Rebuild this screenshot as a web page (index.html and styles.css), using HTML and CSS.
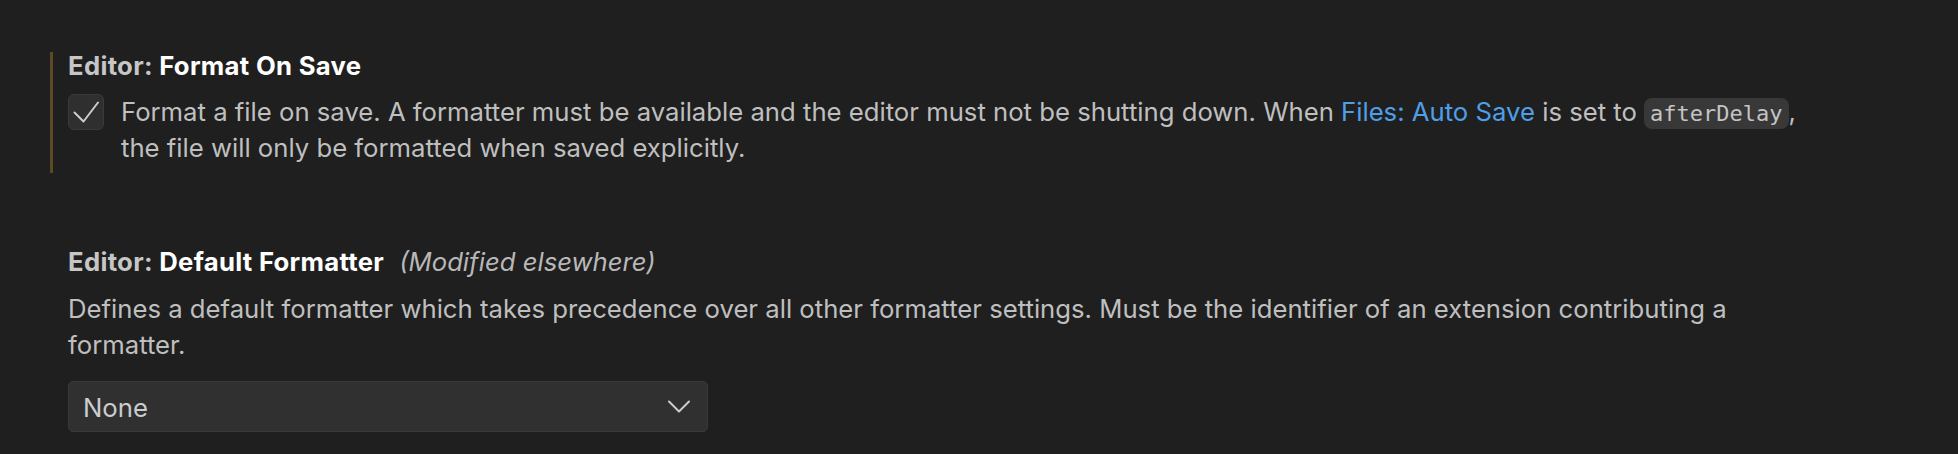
FILE: index.html
```html
<!DOCTYPE html>
<html lang="en">
<head>
<meta charset="utf-8">
<title>Settings</title>
<link rel="stylesheet" href="styles.css">
</head>
<body>
<div class="settings-list">
  <div class="setting modified">
    <div class="setting-title"><span class="category">Editor: </span><span class="label">Format On Save</span></div>
    <div class="bool-row">
      <div class="checkbox">
        <svg width="36" height="36" viewBox="0 0 36 36"><polyline points="6.5,18.5 15.5,27.5 30,8.5" fill="none" stroke="#cccccc" stroke-width="2" stroke-linecap="round" stroke-linejoin="round"/></svg>
      </div>
      <div class="description">Format a file on save. A formatter must be available and the editor must not be shutting down. When <span class="link">Files: Auto Save</span> is set to <code class="code">afterDelay</code>,<br>the file will only be formatted when saved explicitly.</div>
    </div>
  </div>
  <div class="setting second">
    <div class="setting-title"><span class="category">Editor: </span><span class="label">Default Formatter</span><span class="overrides">(Modified elsewhere)</span></div>
    <div class="description">Defines a default formatter which takes precedence over all other formatter settings. Must be the identifier of an extension contributing a formatter.</div>
    <div class="select">
      <span class="select-value">None</span>
      <svg class="chevron" width="22" height="14" viewBox="0 0 22 14"><polyline points="1,1.5 11,11.5 21,1.5" fill="none" stroke="#cccccc" stroke-width="2" stroke-linecap="round" stroke-linejoin="round"/></svg>
    </div>
  </div>
</div>
</body>
</html>
```
FILE: styles.css
```css
html, body {
  margin: 0;
  padding: 0;
  background: #1f1f1f;
}
body {
  font-family: Inter, "Noto Sans", sans-serif;
  font-size: 25.7px;
  color: #bfbfbf;
}
.settings-list {
  padding: 52px 0 0 50px;
  width: 1780px;
  display: flex;
  flex-direction: column;
  gap: 75px;
}
.setting {
  border-left: 3px solid transparent;
  padding-left: 15px;
  padding-bottom: 7px;
}
.setting.modified {
  border-left-color: #5d4a25;
}
.setting-title {
  line-height: 28px;
  font-weight: 700;
  letter-spacing: 0.3px;
  white-space: nowrap;
  margin-bottom: 14px;
}
.second .setting-title {
  margin-bottom: 15px;
}
.category {
  color: #c6c6c6;
}
.label {
  color: #ffffff;
}
.overrides {
  font-style: italic;
  font-weight: 400;
  letter-spacing: 0;
  color: #b8b8b8;
  margin-left: 15px;
}
.bool-row {
  display: flex;
  align-items: flex-start;
  gap: 17px;
}
.checkbox {
  flex: none;
  width: 34px;
  height: 34px;
  border: 1px solid #3a3a3a;
  border-radius: 6px;
  background: #2f2f2f;
  display: flex;
  align-items: center;
  justify-content: center;
}
.checkbox svg {
  display: block;
  margin: -1px;
}
.description {
  line-height: 36px;
  color: #bfbfbf;
}
.link {
  color: #4f9fe8;
}
.code {
  display: inline-block;
  font-family: "DejaVu Sans Mono", monospace;
  font-size: 22px;
  line-height: 31px;
  color: #c4c4c4;
  background: #383838;
  border-radius: 8px;
  padding: 0 6px;
}
.select {
  margin-top: 18px;
  box-sizing: border-box;
  width: 640px;
  height: 51px;
  border: 1px solid #393939;
  border-radius: 5px;
  background: #303030;
  display: flex;
  align-items: center;
  justify-content: space-between;
  padding: 0 17px 0 14px;
}
.select-value {
  color: #cccccc;
  line-height: 36px;
  padding-top: 2px;
}
.chevron {
  display: block;
  margin-top: 1px;
}
```
